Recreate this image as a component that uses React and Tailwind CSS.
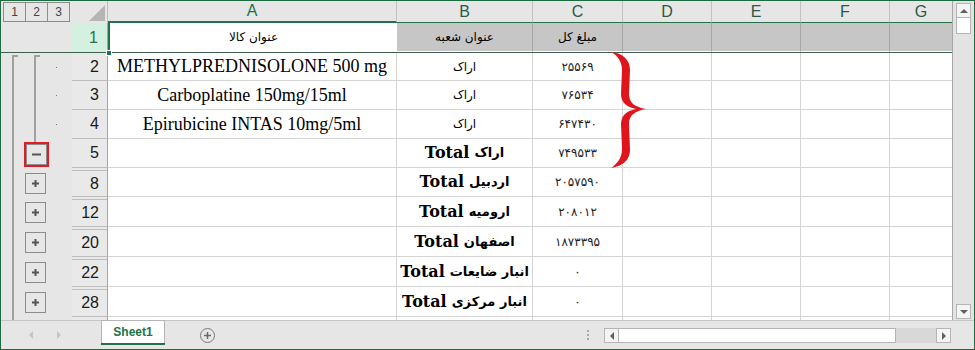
import React from 'react';

const rows = [
  { n: '2', h: 'h-[28px]', kind: 'first', a: 'METHYLPREDNISOLONE 500 mg', b: 'اراک', c: '۲۵۵۶۹' },
  { n: '3', h: 'h-[29px]', kind: 'detail', a: 'Carboplatine 150mg/15ml', b: 'اراک', c: '۷۶۵۳۴' },
  { n: '4', h: 'h-[29px]', kind: 'detail', a: 'Epirubicine INTAS 10mg/5ml', b: 'اراک', c: '۶۴۷۴۳۰' },
  { n: '5', h: 'h-[29px]', kind: 'minus', b: 'اراک', c: '۷۴۹۵۳۳' },
  { n: '8', h: 'h-[29px]', kind: 'plus', b: 'اردبیل', c: '۲۰۵۷۵۹۰', hidden: true },
  { n: '12', h: 'h-[30px]', kind: 'plus', b: 'ارومیه', c: '۲۰۸۰۱۲', hidden: true },
  { n: '20', h: 'h-[30px]', kind: 'plus', b: 'اصفهان', c: '۱۸۷۳۳۹۵', hidden: true },
  { n: '22', h: 'h-[30px]', kind: 'plus', b: 'انبار ضایعات', c: '۰', hidden: true },
  { n: '28', h: 'h-[30px]', kind: 'plus', b: 'انبار مرکزی', c: '۰', hidden: true },
];

// small +/- box of the outline gutter
const OutlineBox = ({ minus }) => (
  <div className="w-[21px] h-[21px] border border-[#8c8c8c] bg-[#e6e6e6] flex items-center justify-center">
    <svg width="9" height="9" viewBox="0 0 9 9">
      {minus ? (
        <rect x="0" y="3.5" width="9" height="2" fill="#555" />
      ) : (
        <>
          <rect x="1" y="3.5" width="7" height="2" fill="#555" />
          <rect x="3.5" y="1" width="2" height="7" fill="#555" />
        </>
      )}
    </svg>
  </div>
);

const Arrow = ({ dir, color = '#606060' }) => {
  const pts = {
    up: '0,5 4,1 8,5',
    down: '0,1 4,5 8,1',
    left: '5,0 1,4 5,8',
    right: '1,0 5,4 1,8',
  }[dir];
  const w = dir === 'up' || dir === 'down' ? 8 : 6;
  const h = dir === 'up' || dir === 'down' ? 6 : 8;
  return (
    <svg width={w} height={h} viewBox={`0 0 ${w} ${h}`}>
      <polygon points={pts} fill={color} />
    </svg>
  );
};

const Gutter = ({ kind }) => (
  <div className="w-[71px] h-full flex bg-[#e6e6e6]">
    {/* level 1 */}
    <div className="w-[23px] h-full flex flex-col">
      {kind === 'first' ? (
        <div className="mt-[2px] ml-[11px] w-[6px] flex-1 border-l-2 border-t-2 border-[#a0a0a0]" />
      ) : kind ? (
        <div className="ml-[11px] w-[2px] flex-1 bg-[#a0a0a0]" />
      ) : null}
    </div>
    {/* level 2 */}
    <div className="w-[25px] h-full flex flex-col">
      {kind === 'first' && (
        <div className="mt-[2px] ml-[10px] w-[6px] flex-1 border-l-2 border-t-2 border-[#a0a0a0]" />
      )}
      {kind === 'detail' && <div className="ml-[10px] w-[2px] flex-1 bg-[#a0a0a0]" />}
      {kind === 'minus' && (
        <>
          <div className="ml-[10px] w-[2px] h-[4px] bg-[#a0a0a0]" />
          <div className="ml-[2px] mt-[1px] w-[21px] outline-2 outline-[#e01b24]">
            <OutlineBox minus />
          </div>
        </>
      )}
      {kind === 'plus' && (
        <div className="flex-1 flex items-center pl-[1px] pt-[1px]">
          <OutlineBox />
        </div>
      )}
    </div>
    {/* dots */}
    <div className="w-[23px] h-full flex items-center">
      {(kind === 'first' || kind === 'detail') && <div className="ml-[7px] w-px h-px bg-[#777]" />}
    </div>
  </div>
);

const DataRow = ({ row }) => {
  const total = !row.a;
  return (
    <div className={`flex ${row.h}`}>
      <Gutter kind={row.kind} />
      <div className="w-[36px] h-full bg-[#e9e9e9] border-r border-b border-r-[#a6a6a6] border-b-[#bdbdbd] flex flex-col">
        {row.hidden && <div className="h-[3px] shrink-0 border-b border-[#bdbdbd]" />}
        <div className="flex-1 flex items-center justify-end pr-[8px] text-[16px] leading-none text-[#1a1a1a]">
          {row.n}
        </div>
      </div>
      <div className="w-[289px] h-full bg-white border-r border-b border-[#d4d4d4] flex items-center justify-center font-['Liberation_Serif',serif] text-[18px] text-black whitespace-nowrap">
        {row.a}
      </div>
      <div
        dir="rtl"
        className="w-[136px] h-full bg-white border-r border-b border-[#d4d4d4] flex items-center justify-center gap-[5px] whitespace-nowrap text-black"
      >
        {total ? (
          <>
            <span className="font-['DejaVu_Sans',sans-serif] font-bold text-[13px]">{row.b}</span>
            <span className="font-['DejaVu_Serif',serif] font-bold text-[16px]">Total</span>
          </>
        ) : (
          <span className="font-['DejaVu_Sans',sans-serif] text-[12px]">{row.b}</span>
        )}
      </div>
      <div className="w-[90px] h-full bg-white border-r border-b border-[#d4d4d4] flex items-center justify-center font-['DejaVu_Sans',sans-serif] text-[12px] text-[#222]">
        {row.c}
      </div>
      <div className="w-[89px] h-full bg-white border-r border-b border-[#d4d4d4]" />
      <div className="w-[89px] h-full bg-white border-r border-b border-[#d4d4d4]" />
      <div className="w-[89px] h-full bg-white border-r border-b border-[#d4d4d4]" />
      <div className="w-[62px] h-full bg-white border-b border-[#d4d4d4]" />
    </div>
  );
};

const colHeaders = [
  { l: 'A', w: 'w-[289px]' },
  { l: 'B', w: 'w-[136px]' },
  { l: 'C', w: 'w-[90px]' },
  { l: 'D', w: 'w-[89px]' },
  { l: 'E', w: 'w-[89px]' },
  { l: 'F', w: 'w-[89px]' },
  { l: 'G', w: 'w-[62px]' },
];

export default function App() {
  return (
    <div className="relative w-[975px] h-[350px] border border-[#1d6b40] bg-[#e6e6e6] flex flex-col overflow-hidden font-['Liberation_Sans',Arial,sans-serif]">
      <div className="flex h-[319px]">
        {/* sheet */}
        <div className="w-[951px] flex flex-col">
          {/* column headers */}
          <div className="flex h-[22px]">
            <div className="w-[71px] bg-[#e6e6e6] pl-[2px] pt-[1px]">
              <div className="flex w-[67px] h-[20px] border border-[#8c8c8c] divide-x divide-[#8c8c8c] text-[12px] text-[#444]">
                {['1', '2', '3'].map((l) => (
                  <div key={l} className="flex-1 flex items-center justify-center">
                    {l}
                  </div>
                ))}
              </div>
            </div>
            <div className="w-[36px] bg-[#e6e6e6] border-r border-[#bdbdbd] flex items-end justify-end pr-[2px] pb-[2px]">
              <svg width="16" height="16" viewBox="0 0 16 16">
                <polygon points="16,0 16,16 0,16" fill="#b5b5b5" />
              </svg>
            </div>
            {colHeaders.map((c, i) => (
              <div
                key={c.l}
                className={`${c.w} h-full bg-[#e6e6e6] ${i < 6 ? 'border-r border-r-[#c2c2c2]' : ''} ${
                  i === 0 ? 'border-b-2 text-[#217346]' : 'border-b text-[#2a5a45]'
                } border-b-[#217346] flex items-center justify-center text-[16px] leading-none`}
              >
                {c.l}
              </div>
            ))}
          </div>

          {/* row 1 (frozen) */}
          <div className="flex h-[29px]">
            <div className="w-[71px] bg-[#e6e6e6]" />
            <div className="w-[36px] bg-[#d3f0e0] border-r border-[#a6a6a6] flex items-center justify-end pr-[9px] text-[16px] leading-none text-[#217346]">
              1
            </div>
            <div className="w-[289px] bg-white border-l-2 border-[#217346] border-b border-b-white flex items-center justify-center font-['DejaVu_Sans',sans-serif] text-[12px] text-black">
              عنوان کالا
            </div>
            <div className="w-[136px] bg-[#c6c6c6] border-r border-r-[#a6a6a6] border-b border-b-white flex items-center justify-center font-['DejaVu_Sans',sans-serif] text-[12px] text-black">
              عنوان شعبه
            </div>
            <div className="w-[90px] bg-[#c6c6c6] border-r border-r-[#a6a6a6] border-b border-b-white flex items-center justify-center font-['DejaVu_Sans',sans-serif] text-[12px] text-black">
              مبلغ کل
            </div>
            <div className="w-[89px] bg-[#c6c6c6] border-r border-r-[#a6a6a6] border-b border-b-white" />
            <div className="w-[89px] bg-[#c6c6c6] border-r border-r-[#a6a6a6] border-b border-b-white" />
            <div className="w-[89px] bg-[#c6c6c6] border-r border-r-[#a6a6a6] border-b border-b-white" />
            <div className="w-[62px] bg-[#c6c6c6] border-b border-b-white" />
          </div>
          <div className="h-px bg-[#3d5f4c]" />

          {rows.map((r) => (
            <DataRow key={r.n} row={r} />
          ))}

          {/* partial next row */}
          <div className="flex h-[3px]">
            <Gutter kind="detail-none" />
            <div className="w-[36px] bg-[#e9e9e9] border-r border-[#a6a6a6]" />
            <div className="w-[289px] bg-white border-r border-[#d4d4d4]" />
            <div className="w-[136px] bg-white border-r border-[#d4d4d4]" />
            <div className="w-[90px] bg-white border-r border-[#d4d4d4]" />
            <div className="w-[89px] bg-white border-r border-[#d4d4d4]" />
            <div className="w-[89px] bg-white border-r border-[#d4d4d4]" />
            <div className="w-[89px] bg-white border-r border-[#d4d4d4]" />
            <div className="w-[62px] bg-white" />
          </div>
        </div>

        {/* vertical scrollbar */}
        <div className="w-[22px] h-full border-l border-[#a6a6a6] bg-[#e3e3e3] flex flex-col items-center pt-[2px]">
          <div className="w-[15px] h-[15px] bg-[#f4f4f4] border border-[#b5b5b5] flex items-center justify-center">
            <Arrow dir="up" />
          </div>
          <div className="w-[15px] h-[17px] bg-white border border-[#b5b5b5] -mt-px" />
          <div className="flex-1" />
          <div className="w-[15px] h-[15px] bg-[#f4f4f4] border border-[#b5b5b5] flex items-center justify-center mb-[1px]">
            <Arrow dir="down" />
          </div>
        </div>
      </div>

      {/* sheet tabs + horizontal scrollbar */}
      <div className="flex h-[29px] border-t border-[#c6c6c6] bg-[#e6e6e6]">
        <div className="w-[100px] flex items-center pl-[27px] gap-[22px]">
          <Arrow dir="left" color="#c4c4c4" />
          <Arrow dir="right" color="#c4c4c4" />
        </div>
        <div className="w-[64px] h-[25px] -mt-px bg-white border-x border-t border-[#b5b5b5] flex flex-col">
          <div className="flex-1 flex items-center justify-center text-[12px] font-bold text-[#217346]">Sheet1</div>
          <div className="h-[2px] bg-[#217346] -mx-px" />
        </div>
        <div className="ml-[35px] flex items-center">
          <div className="w-[15px] h-[15px] rounded-full border-[1.5px] border-[#7a7a7a] flex items-center justify-center">
            <svg width="7" height="7" viewBox="0 0 7 7">
              <rect x="0" y="2.75" width="7" height="1.5" fill="#6a6a6a" />
              <rect x="2.75" y="0" width="1.5" height="7" fill="#6a6a6a" />
            </svg>
          </div>
        </div>
        <div className="flex-1" />
        <div className="flex flex-col justify-center gap-[2px] mr-[15px]">
          <div className="w-[2px] h-[2px] bg-[#a8a8a8]" />
          <div className="w-[2px] h-[2px] bg-[#a8a8a8]" />
          <div className="w-[2px] h-[2px] bg-[#a8a8a8]" />
        </div>
        <div className="w-[347px] flex items-center mr-[23px] pt-[1px]">
          <div className="w-[15px] h-[15px] bg-[#f4f4f4] border border-[#b5b5b5] flex items-center justify-center">
            <Arrow dir="left" />
          </div>
          <div className="w-[278px] h-[15px] bg-white border border-[#b5b5b5] -ml-px" />
          <div className="flex-1 h-[15px] bg-[#d8d8d8]" />
          <div className="w-[15px] h-[15px] bg-[#f4f4f4] border border-[#b5b5b5] flex items-center justify-center">
            <Arrow dir="right" />
          </div>
        </div>
      </div>

      {/* fill handle of the selected cell */}
      <div className="absolute left-[105px] top-[49px] w-[6px] h-[6px] bg-[#217346] border border-white" />

      {/* red brace drawn over column D */}
      <svg className="absolute left-[610px] top-[51px]" width="36" height="116" viewBox="0 0 36 116">
        <path
          d="M0 0 C12 1 19 8 19 18 L18 42 C18 51 24 55 35 57 C24 59 18 63 18 72 L19 98 C19 108 12 114 0 116 C6 112 11 106 11 97 L10 72 C10 64 15 59 25 57 C15 55 10 50 10 42 L11 18 C11 9 6 3 0 0 Z"
          fill="#e0141c"
        />
      </svg>
    </div>
  );
}
